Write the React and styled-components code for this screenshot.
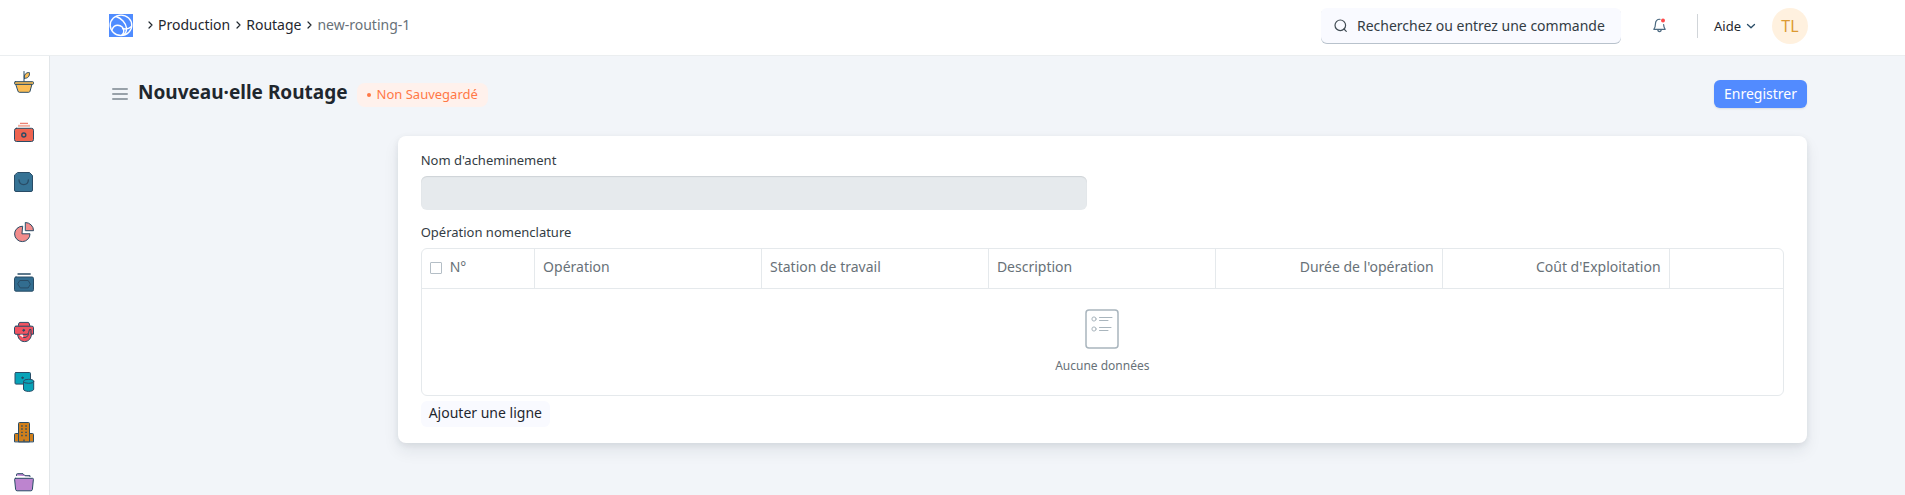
import React from "react";
import styled, { createGlobalStyle } from "styled-components";

const GlobalStyle = createGlobalStyle`
  *, *::before, *::after { box-sizing: border-box; }
  body {
    margin: 0;
    background: #f2f5f9;
    color: #1f272e;
    font-family: "Noto Sans", "Open Sans", sans-serif;
    font-size: 14px;
    line-height: 20px;
  }
  button, input { font: inherit; color: inherit; }
  button { cursor: pointer; border: 0; background: none; padding: 0; }
  a { color: inherit; text-decoration: none; }
`;

const Header = styled.header`
  display: flex;
  align-items: center;
  height: 56px;
  padding: 0 97px 4px 109px;
  background: #fff;
  border-bottom: 1px solid #ebeef0;
`;

const LogoLink = styled.a`
  display: flex;
  margin-right: 15px;
`;

const Breadcrumbs = styled.ol`
  display: flex;
  align-items: center;
  flex: 1;
  gap: 6px;
  margin: 0;
  padding: 0 0 2px;
  list-style: none;
`;

const Crumb = styled.li`
  display: flex;
  align-items: center;
  gap: 5px;
  color: ${(p) => (p.$current ? "#687178" : "#1f272e")};
`;

const SearchBox = styled.label`
  display: flex;
  align-items: center;
  gap: 9px;
  width: 300px;
  height: 36px;
  padding: 0 12px;
  border-radius: 6px;
  background: #f9faff;
  box-shadow: inset 0 -1px 0 #b8c2cc;
`;

const SearchInput = styled.input`
  flex: 1;
  min-width: 0;
  padding: 0;
  border: 0;
  outline: 0;
  background: transparent;
  &::placeholder { color: #333c44; opacity: 1; }
`;

const BellButton = styled.button`
  display: flex;
  margin: 0 31px 0 32px;
`;

const Divider = styled.span`
  width: 1px;
  height: 24px;
  margin-right: 16px;
  background: #d1d5d9;
`;

const HelpButton = styled.button`
  display: flex;
  align-items: center;
  gap: 5px;
  margin-right: 16px;
  font-size: 13px;
`;

const Avatar = styled.button`
  width: 36px;
  height: 36px;
  border-radius: 50%;
  background: #fff1df;
  color: #dc9a33;
  font-size: 16px;
`;

const Body = styled.div`
  display: flex;
  height: calc(100vh - 56px);
`;

const SideNav = styled.nav`
  display: flex;
  flex-direction: column;
  align-items: flex-start;
  gap: 30px;
  width: 50px;
  padding: 16px 0 0 14px;
  overflow: hidden;
  background: #fff;
  border-right: 1px solid #e2e6e9;
  a, svg { display: block; }
  svg { overflow: visible; }
`;

const Main = styled.main`
  flex: 1;
  min-width: 0;
  padding: 24px 98px 24px 59px;
`;

const PageHead = styled.div`
  display: flex;
  align-items: center;
  height: 28px;
  margin-bottom: 28px;
`;

const MenuButton = styled.button`
  display: flex;
  margin: 0 10px 0 3px;
`;

const Title = styled.h1`
  margin: 0;
  padding-bottom: 4px;
  font-size: 19px;
  line-height: 24px;
  font-weight: 700;
`;

const Status = styled.span`
  display: flex;
  align-items: center;
  gap: 6px;
  height: 24px;
  margin: 2px auto 0 9px;
  padding: 0 10px 2px;
  border-radius: 8px;
  background: #fff1ec;
  color: #ff7846;
  font-size: 13px;
  &::before {
    content: "";
    width: 4px;
    height: 4px;
    margin-top: 2px;
    border-radius: 50%;
    background: currentColor;
  }
`;

const SaveButton = styled.button`
  height: 28px;
  padding: 0 10px;
  border-radius: 6px;
  background: #528bff;
  color: #fff;
  box-shadow: 0 1px 2px rgba(0, 0, 0, 0.1);
`;

const Layout = styled.div`
  display: grid;
  grid-template-columns: 17% minmax(0, 1fr);
`;

const Card = styled.form`
  grid-column: 2;
  padding: 14px 23px 16px;
  border-radius: 8px;
  background: #fff;
  box-shadow: 0 8px 16px rgba(31, 39, 46, 0.08), 0 2px 6px rgba(31, 39, 46, 0.08);
`;

const FieldRow = styled.div`
  display: grid;
  grid-template-columns: 1fr 1fr;
  gap: 30px;
  margin-bottom: 12px;
`;

const FieldLabel = styled.label`
  display: block;
  margin-bottom: 6px;
  color: #333c44;
  font-size: 13px;
`;

const TextInput = styled.input`
  display: block;
  width: 100%;
  height: 34px;
  padding: 0 10px;
  border: 0;
  border-radius: 6px;
  background: #e6eaed;
  box-shadow: inset 0 1px 1px rgba(31, 39, 46, 0.12);
`;

const TableFrame = styled.div`
  border: 1px solid #e5e9ec;
  border-radius: 6px;
  overflow: hidden;
`;

const Table = styled.table`
  width: 100%;
  table-layout: fixed;
  border-collapse: separate;
  border-spacing: 0;
  color: #687178;
`;

const Col = styled.col`
  width: ${(p) => p.$span * 8.33}%;
`;

const HeadCell = styled.th`
  height: 40px;
  padding: 0 8px 3px;
  border-bottom: 1px solid #e5e9ec;
  border-right: ${(p) => (p.$last ? "0" : "1px solid #e5e9ec")};
  font-weight: 400;
  text-align: ${(p) => (p.$right ? "right" : "left")};
`;

const CheckLabel = styled.label`
  display: flex;
  align-items: center;
  gap: 8px;
`;

const Checkbox = styled.input`
  appearance: none;
  width: 12px;
  height: 12px;
  margin: 2px 0 0;
  border: 1px solid #b4bec6;
  border-radius: 1px;
  background: #fff;
`;

const EmptyCell = styled.td`
  height: 106px;
  padding: 0;
  font-size: 12px;
  text-align: center;
  svg { display: block; margin: 0 auto 7px; }
`;

const AddButton = styled.button`
  display: block;
  height: 26px;
  margin-top: 5px;
  padding: 0 8px 2px;
  border-radius: 6px;
  background: #f9faff;
`;

const Chevron = () => (
  <svg width="5" height="8" viewBox="0 0 5 8" fill="none" stroke="#1f272e" strokeWidth="1.2" strokeLinecap="round" strokeLinejoin="round" aria-hidden="true">
    <path d="M1 1 4 4 1 7" />
  </svg>
);

const Logo = () => (
  <svg width="24" height="23" viewBox="0 0 24 23" aria-hidden="true">
    <rect width="24" height="23" fill="#4f8cff" />
    <g fill="none" stroke="#fff" strokeWidth="1.4">
      <ellipse cx="12" cy="11.3" rx="10.8" ry="10.2" />
      <path d="M2.800 16C4 12.800 6.300 11.300 8.800 11.300c3.500 0 6.200 2.700 6 6 0 1.700-.8 3.200-2.300 4" />
      <path d="M7 2.500C12.500 4.200 16.800 9 17.500 14c.3 2.600-.7 5-3 7" />
      <path d="M13 14.500c3 .8 7 .3 9.500-2" />
    </g>
  </svg>
);

const outline = { stroke: "#294c66", strokeWidth: 1, strokeLinejoin: "round", strokeLinecap: "round" };

const modules = [
  {
    name: "Agriculture",
    art: (
      <g {...outline} fill="#fbbd55">
        <path d="M10 9.500V-.5M10.500 6.300C9.500 3 12 .2 15.400.600c.5 3.400-1.400 6-4.900 5.700z" />
        <path d="M2 12h16l-2 7.300q-.3 1-1.300 1H5.300q-1 0-1.300-1z" />
        <rect x=".5" y="9.700" width="19" height="2.600" rx=".8" />
      </g>
    ),
  },
  {
    name: "Paiements",
    art: (
      <g>
        <path d="M6 1.300h8" stroke="#e8624f" strokeWidth="1" />
        <path d="M4 3.800h12" stroke="#f3aea0" strokeWidth="2" />
        <g {...outline} fill="#ee6450">
          <rect x=".5" y="6.300" width="19" height="13.200" rx="2" />
          <circle cx="9.800" cy="13" r="2" strokeWidth="1.400" />
        </g>
      </g>
    ),
  },
  {
    name: "Achats",
    art: (
      <g {...outline} fill="#367395">
        <path d="M4 .5h11.500l3 3V18q0 1.500-1.500 1.500H2Q.5 19.500.5 18V3.500z" />
        <path d="M5 7.800c.2 6.400 9.200 6.400 9.400 0" fill="none" strokeWidth="1.300" />
      </g>
    ),
  },
  {
    name: "Rapports",
    art: (
      <g {...outline} fill="#f28c8c">
        <path d="M8.300 4.200a7.700 7.700 0 1 0 7.700 7.600H8.300z" />
        <path d="M11.700.5a8 8 0 0 1 7.800 8.200h-7.800z" />
      </g>
    ),
  },
  {
    name: "Actifs",
    art: (
      <g {...outline} fill="#326d90">
        <path d="M4 2h12.200" strokeWidth="1.400" />
        <rect x=".5" y="5" width="19" height="14.200" rx="1.500" />
        <path d="M6.200 8.500h8l2.200 3.700-2.200 3.700h-8L3.900 12.200z" />
      </g>
    ),
  },
  {
    name: "Assistance",
    art: (
      <g {...outline} fill="#f05361">
        <path d="M3.500 11c0 5.500 3 8.600 7 8.600s7-3 7-8.600V7h-14z" />
        <path d="M4 4.200 5 1q.2-.6 1-.6h8q.8 0 1 .6l1 3.200z" />
        <path d="M2 4.200h16q1.500 0 1.500 1.500v6.500H17V7.500h-1.500c-.8 2-.8 4.800-2.500 4.800H2Q.5 12.300.5 11V5.700Q.5 4.200 2 4.200z" />
        <circle cx="9.700" cy="8.300" r=".9" fill="#294c66" />
        <path d="M6.300 13.300 9.200 15.200 8.500 13z" fill="#fff" stroke="#fff" strokeWidth=".6" />
        <path d="M9.500 15.500c2.500.6 4.500-.8 5-3.500" fill="none" />
      </g>
    ),
  },
  {
    name: "Stock",
    art: (
      <g {...outline} fill="#08a3b8">
        <rect x="1" y=".5" width="15.500" height="11.600" rx="1" />
        <circle cx="8.500" cy="5.800" r=".8" fill="#294c66" />
        <path d="M9.500 9.300v7.900c0 1.200 2.300 2.200 5.100 2.200s5.100-1 5.100-2.200V9.300" />
        <ellipse cx="14.600" cy="9.300" rx="5.100" ry="2" />
      </g>
    ),
  },
  {
    name: "Organisation",
    art: (
      <g {...outline} fill="#d07f1b">
        <path d="M.5 19.500v-7q0-1 1-1h17q1 0 1 1v7z" />
        <path d="M4.500 19.500V1.500q0-1 1-1h9q1 0 1 1v18z" />
        <path d="M7.200 4h1.500M11.300 4h1.500M7.200 7h1.500M11.300 7h1.500M7.200 10.300h1.500M11.300 10.300h1.500M7.200 13.500h1.500M11.300 13.500h1.500M10 17.500v2" strokeWidth="1.300" strokeLinecap="butt" />
      </g>
    ),
  },
  {
    name: "Projets",
    art: (
      <g {...outline} fill="#bd84cf">
        <path d="M2.500 3.500v-1q0-.8 1-.8H9l2 2h5v.8" />
        <path d="M1.500 6.300h17q1 0 .9 1l-1 10q-.2 1.500-1.500 1.500H3.100q-1.300 0-1.500-1.500l-1-10q-.1-1 .9-1z" />
      </g>
    ),
  },
];

const columns = [
  { title: "Opération" },
  { title: "Station de travail" },
  { title: "Description" },
  { title: "Durée de l'opération", right: true },
  { title: "Coût d'Exploitation", right: true },
];

export default function App() {
  return (
    <>
      <GlobalStyle />
      <Header>
        <LogoLink href="#" aria-label="Accueil"><Logo /></LogoLink>
        <Breadcrumbs>
          <Crumb><Chevron /><a href="#production">Production</a></Crumb>
          <Crumb><Chevron /><a href="#routage">Routage</a></Crumb>
          <Crumb $current><Chevron /><a href="#new-routing-1">new-routing-1</a></Crumb>
        </Breadcrumbs>
        <SearchBox>
          <svg width="15" height="15" viewBox="0 0 15 15" fill="none" stroke="#404b53" strokeWidth="1.200" strokeLinecap="round" aria-hidden="true">
            <circle cx="7.300" cy="7.300" r="5.300" />
            <path d="m11 11 2.300 2.300" />
          </svg>
          <SearchInput type="text" placeholder="Recherchez ou entrez une commande" aria-label="Recherche" />
        </SearchBox>
        <BellButton type="button" aria-label="Notifications">
          <svg width="13" height="15" viewBox="0 0 13 15" fill="none" stroke="#4c6a80" strokeWidth="1.200" strokeLinecap="round" strokeLinejoin="round">
            <path d="M7 1.300C4.300 1 2.500 3 2.500 5.500c0 3-.7 4.500-1.700 5.800h11.400c-1-1.300-1.500-2.600-1.600-4.800" />
            <path d="M4.800 11.500c0 2.700 3.400 2.700 3.400 0" />
            <circle cx="10" cy="2.500" r="2" fill="#ff4a4a" stroke="none" />
          </svg>
        </BellButton>
        <Divider />
        <HelpButton type="button">
          Aide
          <svg width="10" height="8" viewBox="0 0 10 8" fill="none" stroke="#294c66" strokeWidth="1.300" strokeLinecap="round" strokeLinejoin="round">
            <path d="m1.500 2.500 3.500 3.300 3.500-3.300" />
          </svg>
        </HelpButton>
        <Avatar type="button">TL</Avatar>
      </Header>
      <Body>
        <SideNav aria-label="Modules">
          {modules.map((m) => (
            <a key={m.name} href="#module" aria-label={m.name}>
              <svg width="20" height="20" viewBox="0 0 20 20">{m.art}</svg>
            </a>
          ))}
        </SideNav>
        <Main>
          <PageHead>
            <MenuButton type="button" aria-label="Menu">
              <svg width="16" height="14" viewBox="0 0 16 14" stroke="#98a1a9" strokeWidth="2" strokeLinecap="round">
                <path d="M1 2h14M1 7h14M1 12h14" />
              </svg>
            </MenuButton>
            <Title>Nouveau·elle Routage</Title>
            <Status>Non Sauvegardé</Status>
            <SaveButton type="button">Enregistrer</SaveButton>
          </PageHead>
          <Layout>
            <Card>
              <FieldRow>
                <div>
                  <FieldLabel htmlFor="routing-name">Nom d'acheminement</FieldLabel>
                  <TextInput id="routing-name" type="text" />
                </div>
              </FieldRow>
              <FieldLabel as="div" id="operations-label">Opération nomenclature</FieldLabel>
              <TableFrame>
                <Table aria-labelledby="operations-label">
                  <colgroup>
                    {[1, 2, 2, 2, 2, 2, 1].map((span, i) => <Col key={i} $span={span} />)}
                  </colgroup>
                  <thead>
                    <tr>
                      <HeadCell><CheckLabel><Checkbox type="checkbox" />N°</CheckLabel></HeadCell>
                      {columns.map((c) => <HeadCell key={c.title} $right={c.right}>{c.title}</HeadCell>)}
                      <HeadCell $last />
                    </tr>
                  </thead>
                  <tbody>
                    <tr>
                      <EmptyCell colSpan={7}>
                        <svg width="34" height="40" viewBox="0 0 34 40" fill="none" stroke="#a9b5bd" strokeLinecap="round">
                          <rect x="1" y="1" width="32" height="38" rx="3" strokeWidth="1.500" />
                          <circle cx="9" cy="10" r="2.100" />
                          <circle cx="9" cy="20" r="2.100" />
                          <path d="M14.500 8.500h12.500M14.500 11.500h8.500M14.500 18.500h11.500M14.500 21.500h8.500" />
                        </svg>
                        Aucune données
                      </EmptyCell>
                    </tr>
                  </tbody>
                </Table>
              </TableFrame>
              <AddButton type="button">Ajouter une ligne</AddButton>
            </Card>
          </Layout>
        </Main>
      </Body>
    </>
  );
}
